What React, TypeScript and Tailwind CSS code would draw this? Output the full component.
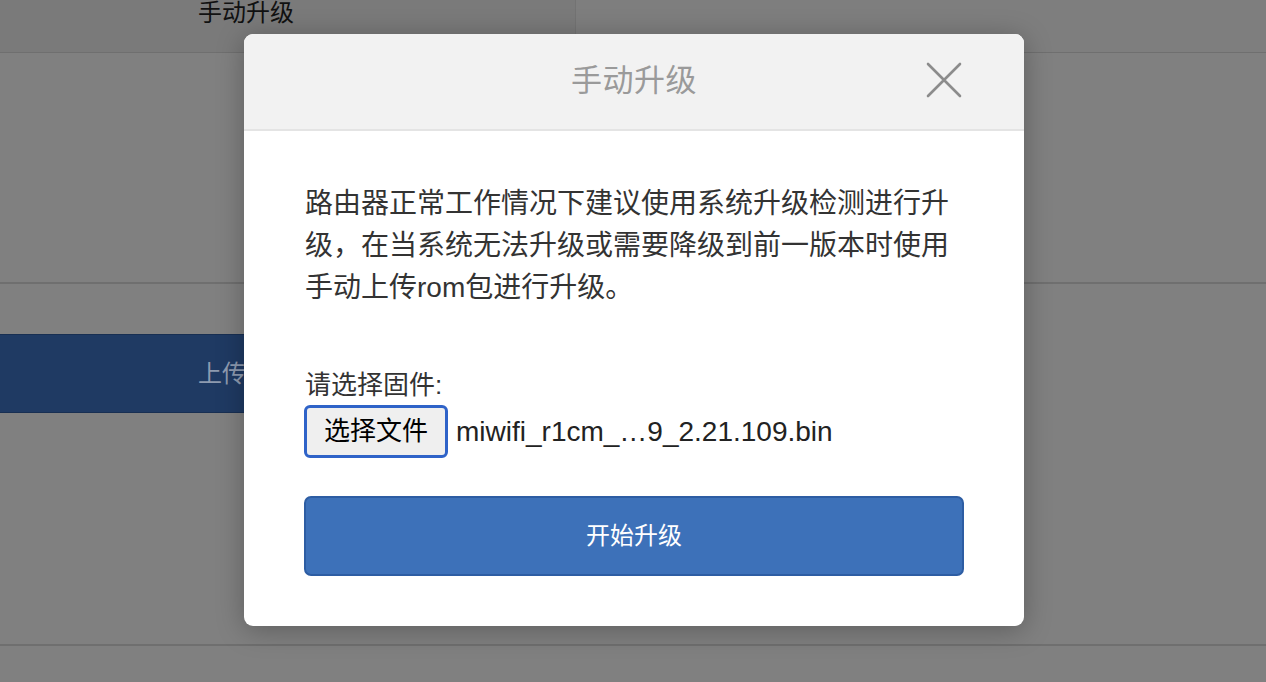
import React from "react";

const FONT = '"Liberation Sans", "Noto Sans CJK SC", Arial, sans-serif';

function CloseIcon() {
  return (
    <svg width="36" height="36" viewBox="0 0 36 36" fill="none">
      <path d="M2 2 L34 34 M34 2 L2 34" stroke="#8c8c8c" strokeWidth="2.6" strokeLinecap="round" />
    </svg>
  );
}

export default function App() {
  return (
    <div className="relative w-[1266px] h-[682px] overflow-hidden bg-[#808080]" style={{ fontFamily: FONT }}>
      {/* dimmed background page */}
      <div className="flex flex-col">
        <div className="flex h-[53px] border-b border-[#6f6f6f]">
          <div className="w-[576px] bg-[#7a7a7a] border-r border-[#737373] pl-[198px] pt-0">
            <span className="block text-[24px] leading-[26px] text-[#111111]">手动升级</span>
          </div>
          <div className="flex-1 bg-[#7e7e7e]" />
        </div>
        <div className="h-[231px] border-b-2 border-[#6f6f6f]" />
        <div className="h-[50px]" />
        <div className="flex items-center h-[79px] w-[700px] bg-[#1f3a63] border-y border-[#182f52] pl-[198px]">
          <span className="text-[24px] text-[#8e9bb0]">上传并升级</span>
        </div>
        <div className="h-[233px] border-b-2 border-[#6f6f6f]" />
      </div>

      {/* modal layer */}
      <div className="absolute inset-0 flex justify-center pt-[34px] pl-[2px]">
        <div className="w-[780px] h-[592px] bg-white rounded-[9px] overflow-hidden shadow-[0_4px_28px_rgba(0,0,0,0.28)] flex flex-col">
          <div className="relative h-[97px] bg-[#f2f2f2] border-b-2 border-[#e4e4e4] flex items-center justify-center shrink-0">
            <span className="text-[31px] text-[#9a9a9a] tracking-[0.5px]">手动升级</span>
            <div className="absolute right-[62px] top-[28px]">
              <CloseIcon />
            </div>
          </div>
          <div className="flex flex-col pl-[60px] pr-[60px] pt-[52px]">
            <p className="pl-[1px] text-[28px] leading-[42px] text-[#333333]">
              路由器正常工作情况下建议使用系统升级检测进行升级，在当系统无法升级或需要降级到前一版本时使用手动上传rom包进行升级。
            </p>
            <div className="pl-[1px] mt-[59px] text-[26px] leading-[34px] text-[#333333]">请选择固件:</div>
            <div className="mt-[3px] flex items-center">
              <div className="h-[53px] px-[17px] flex items-center rounded-[6px] border-[3px] border-[#2f63c8] bg-[#efefef] text-[26px] text-black">
                选择文件
              </div>
              <span className="ml-[8px] text-[28px] text-[#222222]">miwifi_r1cm_…9_2.21.109.bin</span>
            </div>
            <div className="mt-[38px] h-[80px] rounded-[7px] bg-[#3d71b9] border-2 border-[#2d5da3] flex items-center justify-center text-[24px] text-white">
              开始升级
            </div>
          </div>
        </div>
      </div>
    </div>
  );
}
